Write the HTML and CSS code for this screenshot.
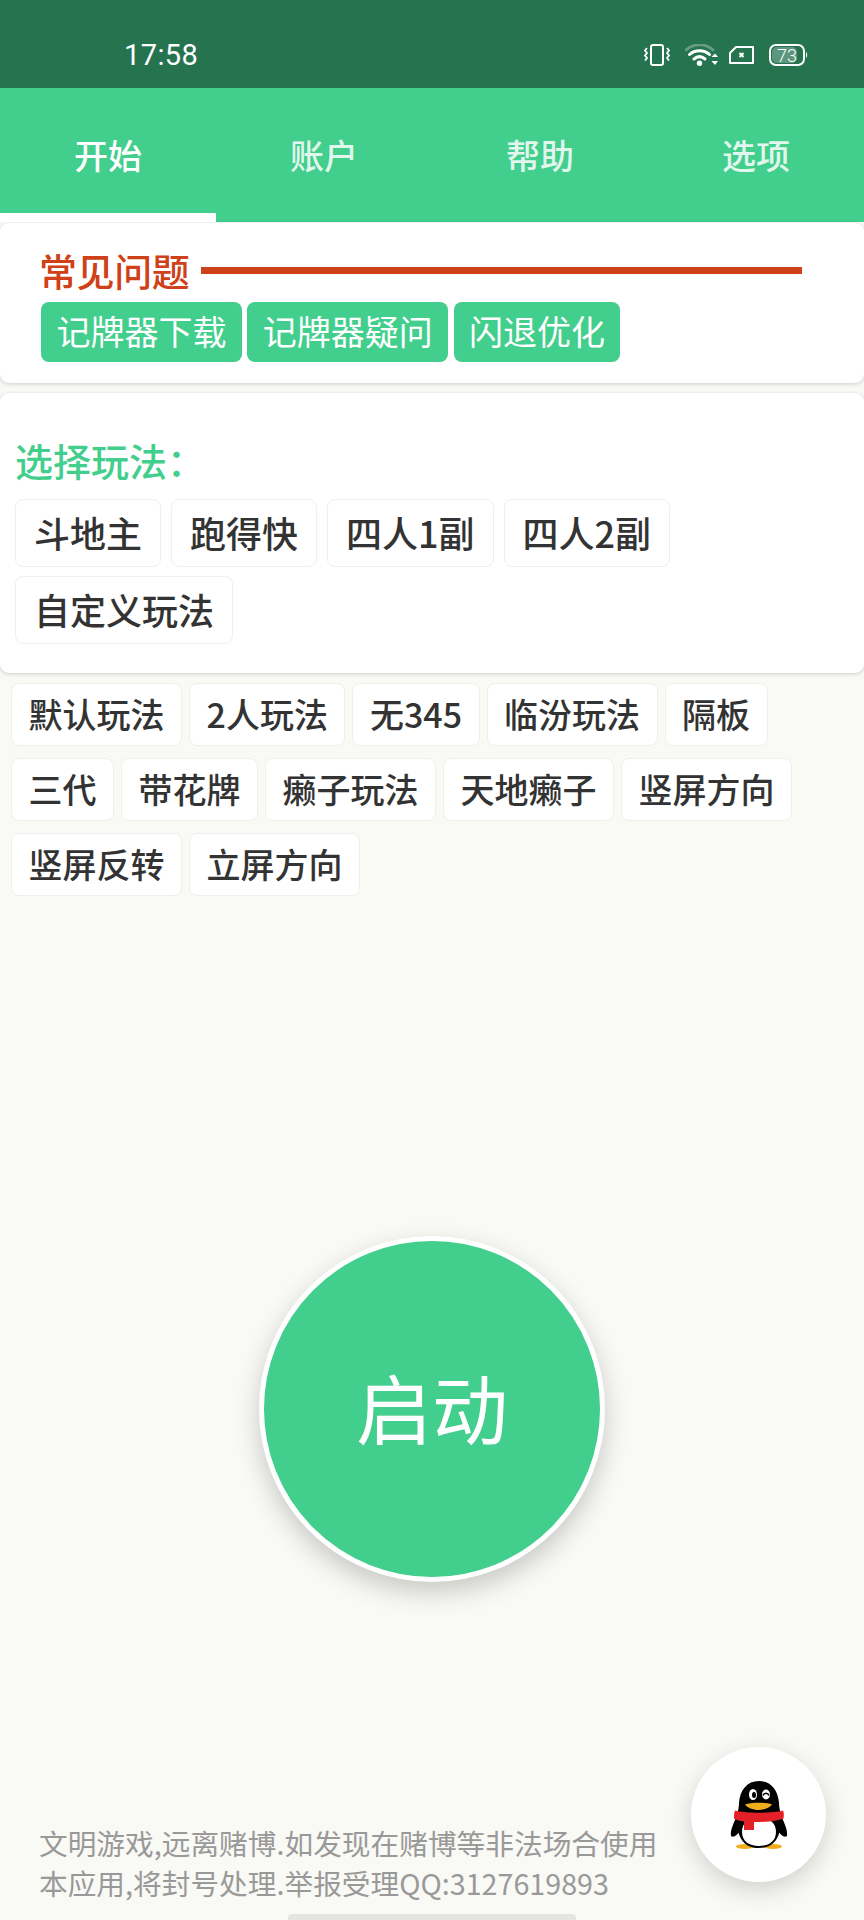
FILE: index.html
```html
<!DOCTYPE html>
<html lang="zh-CN">
<head>
  <meta charset="UTF-8">
  <meta name="viewport" content="width=device-width, initial-scale=1.0">
  <title>开始</title>
  <link rel="stylesheet" href="styles.css">
</head>
<body>
  <header class="status-bar">
    <span class="clock">17:58</span>
    <div class="status-icons">
      <!-- vibrate -->
      <svg class="icon-vibrate" width="26" height="22" viewBox="0 0 26 22" fill="none" stroke="#fff">
        <rect x="7" y="1" width="12" height="20" rx="2" stroke-width="2"/>
        <path d="M3 4l-2 2.500 2 2.500-2 2.500 2 2.500-2 2.500M23 4l2 2.500-2 2.500 2 2.500-2 2.500 2 2.500" stroke-width="1.800"/>
      </svg>
      <!-- wifi with up/down arrows -->
      <svg class="icon-wifi" width="33" height="22" viewBox="0 0 33 22" fill="none" stroke="#fff" stroke-linecap="round">
        <path d="M1 6C8-1 21-1 28 6" stroke-width="2.800" opacity=".3"/>
        <path d="M4.500 10.500C10 5.500 19 5.500 24.500 10.500" stroke-width="3"/>
        <path d="M9 15C12.500 12 16.500 12 20 15" stroke-width="3"/>
        <circle cx="14.500" cy="19.300" r="2.700" fill="#fff" stroke="none"/>
        <path d="M26.500 13l3.500-3.500 3 3.500z" fill="#fff" stroke="none"/>
        <path d="M26.500 17l3.500 4 3-4z" fill="#fff" stroke="none"/>
      </svg>
      <!-- sim card, no service -->
      <svg class="icon-sim" width="25" height="18" viewBox="0 0 25 18" fill="none" stroke="#fff">
        <path d="M7 1H24V17H1V7z" stroke-width="2" stroke-linejoin="round"/>
        <path d="M10.500 7l4 4M14.500 7l-4 4" stroke-width="2"/>
      </svg>
      <!-- battery level -->
      <svg class="icon-battery" width="39" height="22" viewBox="0 0 39 22">
        <rect x="3" y="3" width="25" height="16" rx="5" fill="#fff" opacity=".25"/>
        <rect x="1" y="1" width="34" height="20" rx="6" fill="none" stroke="#fff" stroke-width="2"/>
        <path d="M37 8c1.500 1 1.500 5 0 6z" fill="#fff"/>
        <text x="18" y="17.500" class="battery-text">73</text>
      </svg>
    </div>
  </header>

  <nav class="tabs">
    <a class="tab tab-active">开始</a>
    <a class="tab">账户</a>
    <a class="tab">帮助</a>
    <a class="tab">选项</a>
  </nav>

  <section class="card faq-card">
    <div class="faq-title">
      <span>常见问题</span>
      <i class="faq-line"></i>
    </div>
    <div class="faq-links">
      <a class="faq-btn">记牌器下载</a>
      <a class="faq-btn">记牌器疑问</a>
      <a class="faq-btn">闪退优化</a>
    </div>
  </section>

  <section class="card mode-card">
    <div class="mode-title">选择玩法：</div>
    <div class="mode-list">
      <a class="chip chip-big">斗地主</a>
      <a class="chip chip-big">跑得快</a>
      <a class="chip chip-big">四人1副</a>
      <a class="chip chip-big">四人2副</a>
      <a class="chip chip-big">自定义玩法</a>
    </div>
  </section>

  <div class="rule-list">
    <a class="chip">默认玩法</a>
    <a class="chip">2人玩法</a>
    <a class="chip">无345</a>
    <a class="chip">临汾玩法</a>
    <a class="chip">隔板</a>
    <a class="chip">三代</a>
    <a class="chip">带花牌</a>
    <a class="chip">癞子玩法</a>
    <a class="chip">天地癞子</a>
    <a class="chip">竖屏方向</a>
    <a class="chip">竖屏反转</a>
    <a class="chip">立屏方向</a>
  </div>

  <a class="start-btn">启动</a>

  <p class="notice">文明游戏,远离赌博.如发现在赌博等非法场合使用<br>本应用,将封号处理.举报受理QQ:3127619893</p>

  <div class="home-bar"></div>

  <a class="qq-btn">
    <svg width="58" height="68" viewBox="0 0 58 68">
      <!-- feet -->
      <ellipse cx="15" cy="65.500" rx="9" ry="2.500" fill="#f2ad1d"/>
      <ellipse cx="43" cy="65.500" rx="9" ry="2.500" fill="#f2ad1d"/>
      <!-- flippers -->
      <path d="M7 34C4 42 0 49 1 55c3 2 6-1 9-5z" fill="#000"/>
      <path d="M51 34c3 8 7 15 6 21-3 2-6-1-9-5z" fill="#000"/>
      <!-- body -->
      <path d="M29 0C17 0 10 9 9 22c0 4-1 8-2 12-1 16 3 33 22 33s23-17 22-33c-1-4-2-8-2-12C48 9 41 0 29 0z" fill="#000"/>
      <path d="M29 37c-10 0-17 4-17 14 0 9 7 14 17 14s17-5 17-14c0-10-7-14-17-14z" fill="#fff"/>
      <!-- eyes -->
      <ellipse cx="23" cy="13.500" rx="4" ry="5.500" fill="#fff"/>
      <ellipse cx="24" cy="14" rx="2" ry="3" fill="#000"/>
      <ellipse cx="36" cy="13.500" rx="4" ry="5" fill="#fff"/>
      <path d="M33 14.500c1-3 5-3 6 0" fill="none" stroke="#000" stroke-width="1.500"/>
      <!-- beak -->
      <path d="M15 23.500c6-2.500 21-2.500 27 0-2 3-8 5.500-13.500 5.500S17 26.500 15 23.500z" fill="#f2ad1d"/>
      <!-- scarf -->
      <path d="M5 29.500c12 3 36 3 48 0 1 2 1 5 .5 8-6 2.500-15 3.500-29.500 3.500V49H14V40.500c-4-.5-8-1.500-10-3 0-3 0-6 1-8z" fill="#e32027"/>
    </svg>
  </a>
</body>
</html>
```

FILE: styles.css
```css
* {
  box-sizing: border-box;
}
body {
  margin: 0;
  width: 864px;
  height: 1920px;
  overflow: hidden;
  position: relative;
  background-color: #f9faf5;
  font-family: "Noto Sans CJK SC", "Noto Sans", sans-serif;
  color: #333;
}

/* status bar */
.status-bar {
  height: 88px;
  background-color: #267350;
  color: white;
  display: flex;
  align-items: center;
  justify-content: space-between;
  padding: 22px 56px 0 124px;
}
.clock {
  font-family: Roboto, sans-serif;
  font-size: 29px;
  letter-spacing: 0.4px;
}
.status-icons {
  display: flex;
  align-items: center;
  gap: 15px;
}
.icon-sim {
  margin-left: -4px;
}
.battery-text {
  font-family: Roboto, sans-serif;
  font-weight: 300;
  font-size: 18px;
  fill: white;
  text-anchor: middle;
}

/* tabs */
.tabs {
  height: 134px;
  background-color: #42ce8c;
  display: flex;
}
.tab {
  flex: 1;
  display: flex;
  align-items: center;
  justify-content: center;
  padding-bottom: 2px;
  font-size: 34px;
  font-weight: 500;
  color: rgba(255, 255, 255, 0.85);
}
.tab-active {
  color: white;
  border-bottom: 9px solid white;
  padding: 7px 0 0;
}

/* cards */
.card {
  background-color: white;
  border-radius: 9px;
  box-shadow: 0 1px 4px rgba(0, 0, 0, 0.18);
}
.faq-card {
  margin-top: 1px;
  height: 160px;
  padding: 25px 62px 0 41px;
}
.faq-title {
  display: flex;
  align-items: center;
  gap: 12px;
  margin: 0 0 10px -2px;
  font-size: 38px;
  font-weight: 500;
  line-height: 44px;
  letter-spacing: -0.4px;
  color: #cf4119;
}
.faq-line {
  flex: 1;
  height: 7px;
  background-color: #cf4119;
}
.faq-links {
  display: flex;
  gap: 5.5px;
}
.faq-btn {
  height: 60px;
  line-height: 58px;
  padding: 0 15.4px;
  font-size: 34px;
  color: white;
  background-color: #42ce8c;
  border-radius: 8px;
}

.mode-card {
  margin-top: 10px;
  height: 280px;
  padding: 45px 15px 0;
}
.mode-title {
  font-size: 38px;
  font-weight: 500;
  line-height: 44px;
  color: #42ce8c;
  margin-bottom: 17px;
}
.mode-list {
  display: flex;
  flex-wrap: wrap;
  gap: 9px 10px;
}

/* chips */
.chip {
  height: 63px;
  line-height: 59px;
  padding: 0 16.5px;
  font-size: 34px;
  font-weight: 500;
  background-color: white;
  border: 1px solid #efefec;
  border-radius: 8px;
}
.chip-big {
  height: 68px;
  line-height: 64px;
  padding: 0 18px;
  font-size: 36px;
}
.rule-list {
  display: flex;
  flex-wrap: wrap;
  gap: 12px 7px;
  margin-top: 10px;
  padding-left: 11px;
}

/* start button */
.start-btn {
  display: flex;
  align-items: center;
  justify-content: center;
  width: 346px;
  height: 346px;
  margin: 340px auto 0;
  padding-bottom: 6px;
  font-size: 76px;
  color: white;
  background-color: #42ce8c;
  border: 5px solid white;
  border-radius: 50%;
  box-shadow: 0 10px 26px rgba(0, 0, 0, 0.2);
}

/* footer */
.notice {
  margin: 241px 0 0 39px;
  font-size: 28.7px;
  line-height: 40px;
  color: #999;
}
.home-bar {
  width: 288px;
  height: 7px;
  margin: 11px auto 0;
  background-color: #e4e5e1;
  border-radius: 4px 4px 0 0;
}

/* floating qq button */
.qq-btn {
  position: absolute;
  left: 691px;
  top: 1747px;
  width: 135px;
  height: 135px;
  display: flex;
  align-items: center;
  justify-content: center;
  background-color: white;
  border-radius: 50%;
  box-shadow: 0 8px 24px rgba(0, 0, 0, 0.16);
}
```
